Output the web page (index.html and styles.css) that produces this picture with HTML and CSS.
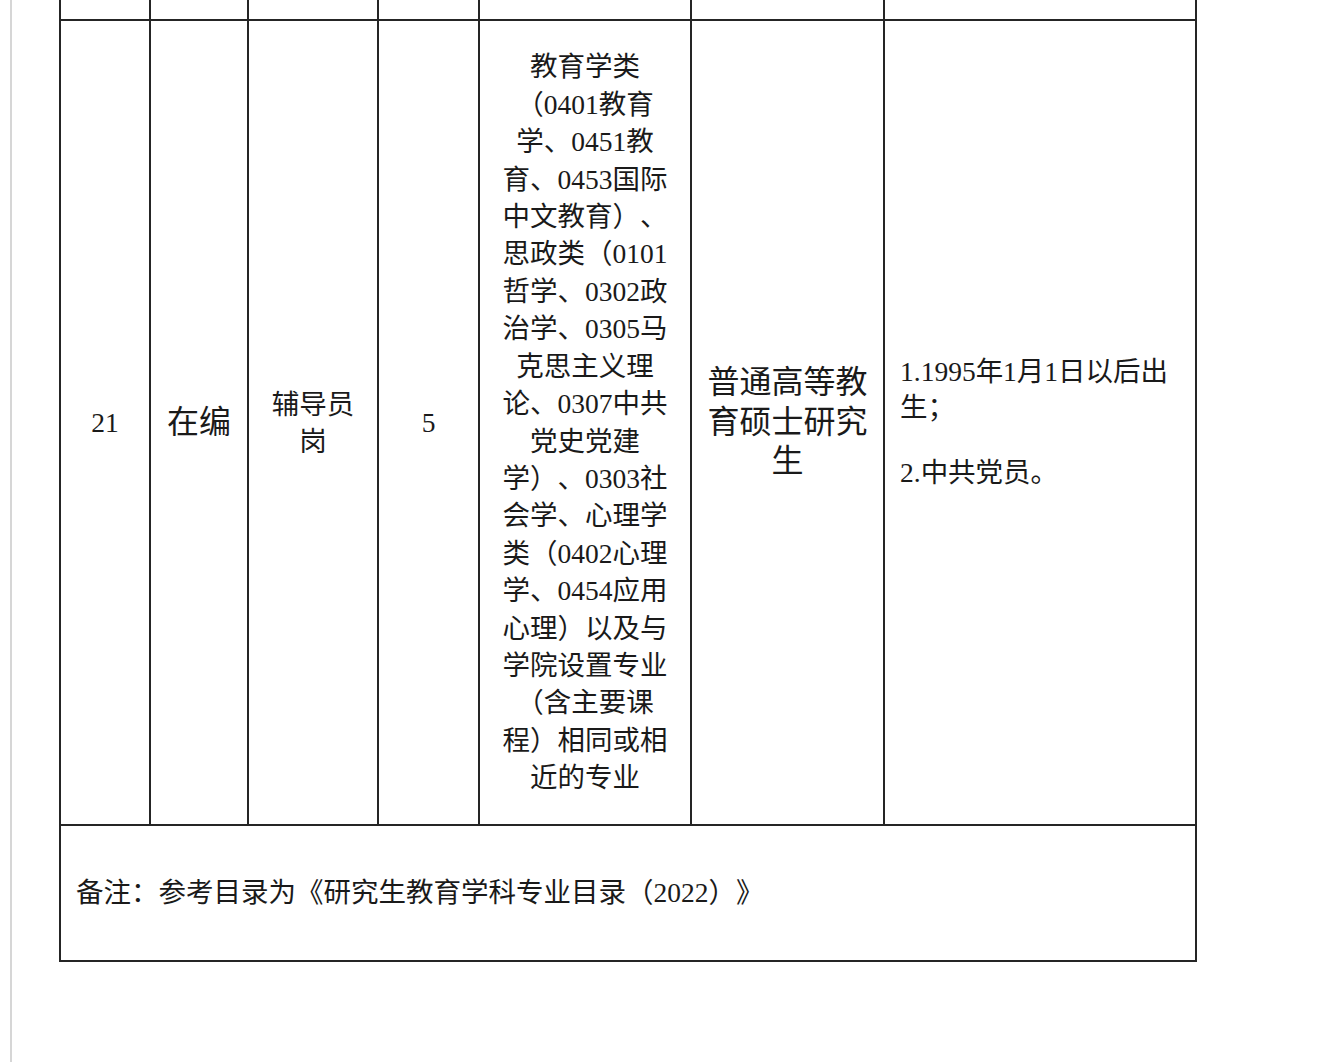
FILE: index.html
```html
<!DOCTYPE html>
<html lang="zh-CN">
<head>
<meta charset="utf-8">
<title>岗位表</title>
<link rel="stylesheet" href="styles.css">
</head>
<body>
<div class="page">
  <table class="jobs">
    <colgroup>
      <col class="c1"><col class="c2"><col class="c3"><col class="c4"><col class="c5"><col class="c6"><col class="c7">
    </colgroup>
    <tr class="prev">
      <td></td><td></td><td></td><td></td><td></td><td></td><td></td>
    </tr>
    <tr class="main">
      <td class="num">21</td>
      <td class="big">在编</td>
      <td class="mid">辅导员<br>岗</td>
      <td class="num">5</td>
      <td class="major">教育学类<br>（0401教育<br>学、0451教<br>育、0453国际<br>中文教育）、<br>思政类（0101<br>哲学、0302政<br>治学、0305马<br>克思主义理<br>论、0307中共<br>党史党建<br>学）、0303社<br>会学、心理学<br>类（0402心理<br>学、0454应用<br>心理）以及与<br>学院设置专业<br>（含主要课<br>程）相同或相<br>近的专业</td>
      <td class="degree">普通高等教<br>育硕士研究<br>生</td>
      <td class="req">
        <p>1.1995年1月1日以后出<br>生；</p>
        <p>2.中共党员。</p>
      </td>
    </tr>
    <tr class="note">
      <td colspan="7">备注：参考目录为《研究生教育学科专业目录（2022）》</td>
    </tr>
  </table>
</div>
</body>
</html>
```

FILE: styles.css
```css
html, body {
  margin: 0;
  padding: 0;
  background: #ffffff;
}
body {
  font-family: "Liberation Serif", "Noto Sans CJK SC", serif;
  color: #1a1a1a;
  text-spacing-trim: space-all;
}
.page {
  margin-left: 10px;
  border-left: 2px solid #d6d6d6;
  min-height: 1062px;
  padding-left: 47px;
  box-sizing: border-box;
}
.jobs {
  border-collapse: collapse;
  table-layout: fixed;
  width: 1136px;
  font-size: 27.5px;
  line-height: 37.4px;
}
.c1 { width: 90px; }
.c2 { width: 98px; }
.c3 { width: 130px; }
.c4 { width: 101px; }
.c5 { width: 212px; }
.c6 { width: 193px; }
.c7 { width: 312px; }
.jobs td {
  border: 2px solid #252525;
  padding: 0;
  text-align: center;
  vertical-align: middle;
}
.prev td {
  border-top: none;
  height: 19px;
}
.main td {
  height: 803px;
}
.big {
  font-size: 32px;
}
.mid {
  line-height: 37px;
}
.major {
  white-space: nowrap;
}
.degree {
  font-size: 32px;
  line-height: 39.5px;
}
.jobs td.req {
  text-align: left;
  padding: 0 15px;
  line-height: 36px;
}
.req p {
  margin: 0;
}
.req p + p {
  margin-top: 29px;
}
.note td {
  height: 134px;
}
.jobs .note td {
  text-align: left;
  padding-left: 15px;
}
```
